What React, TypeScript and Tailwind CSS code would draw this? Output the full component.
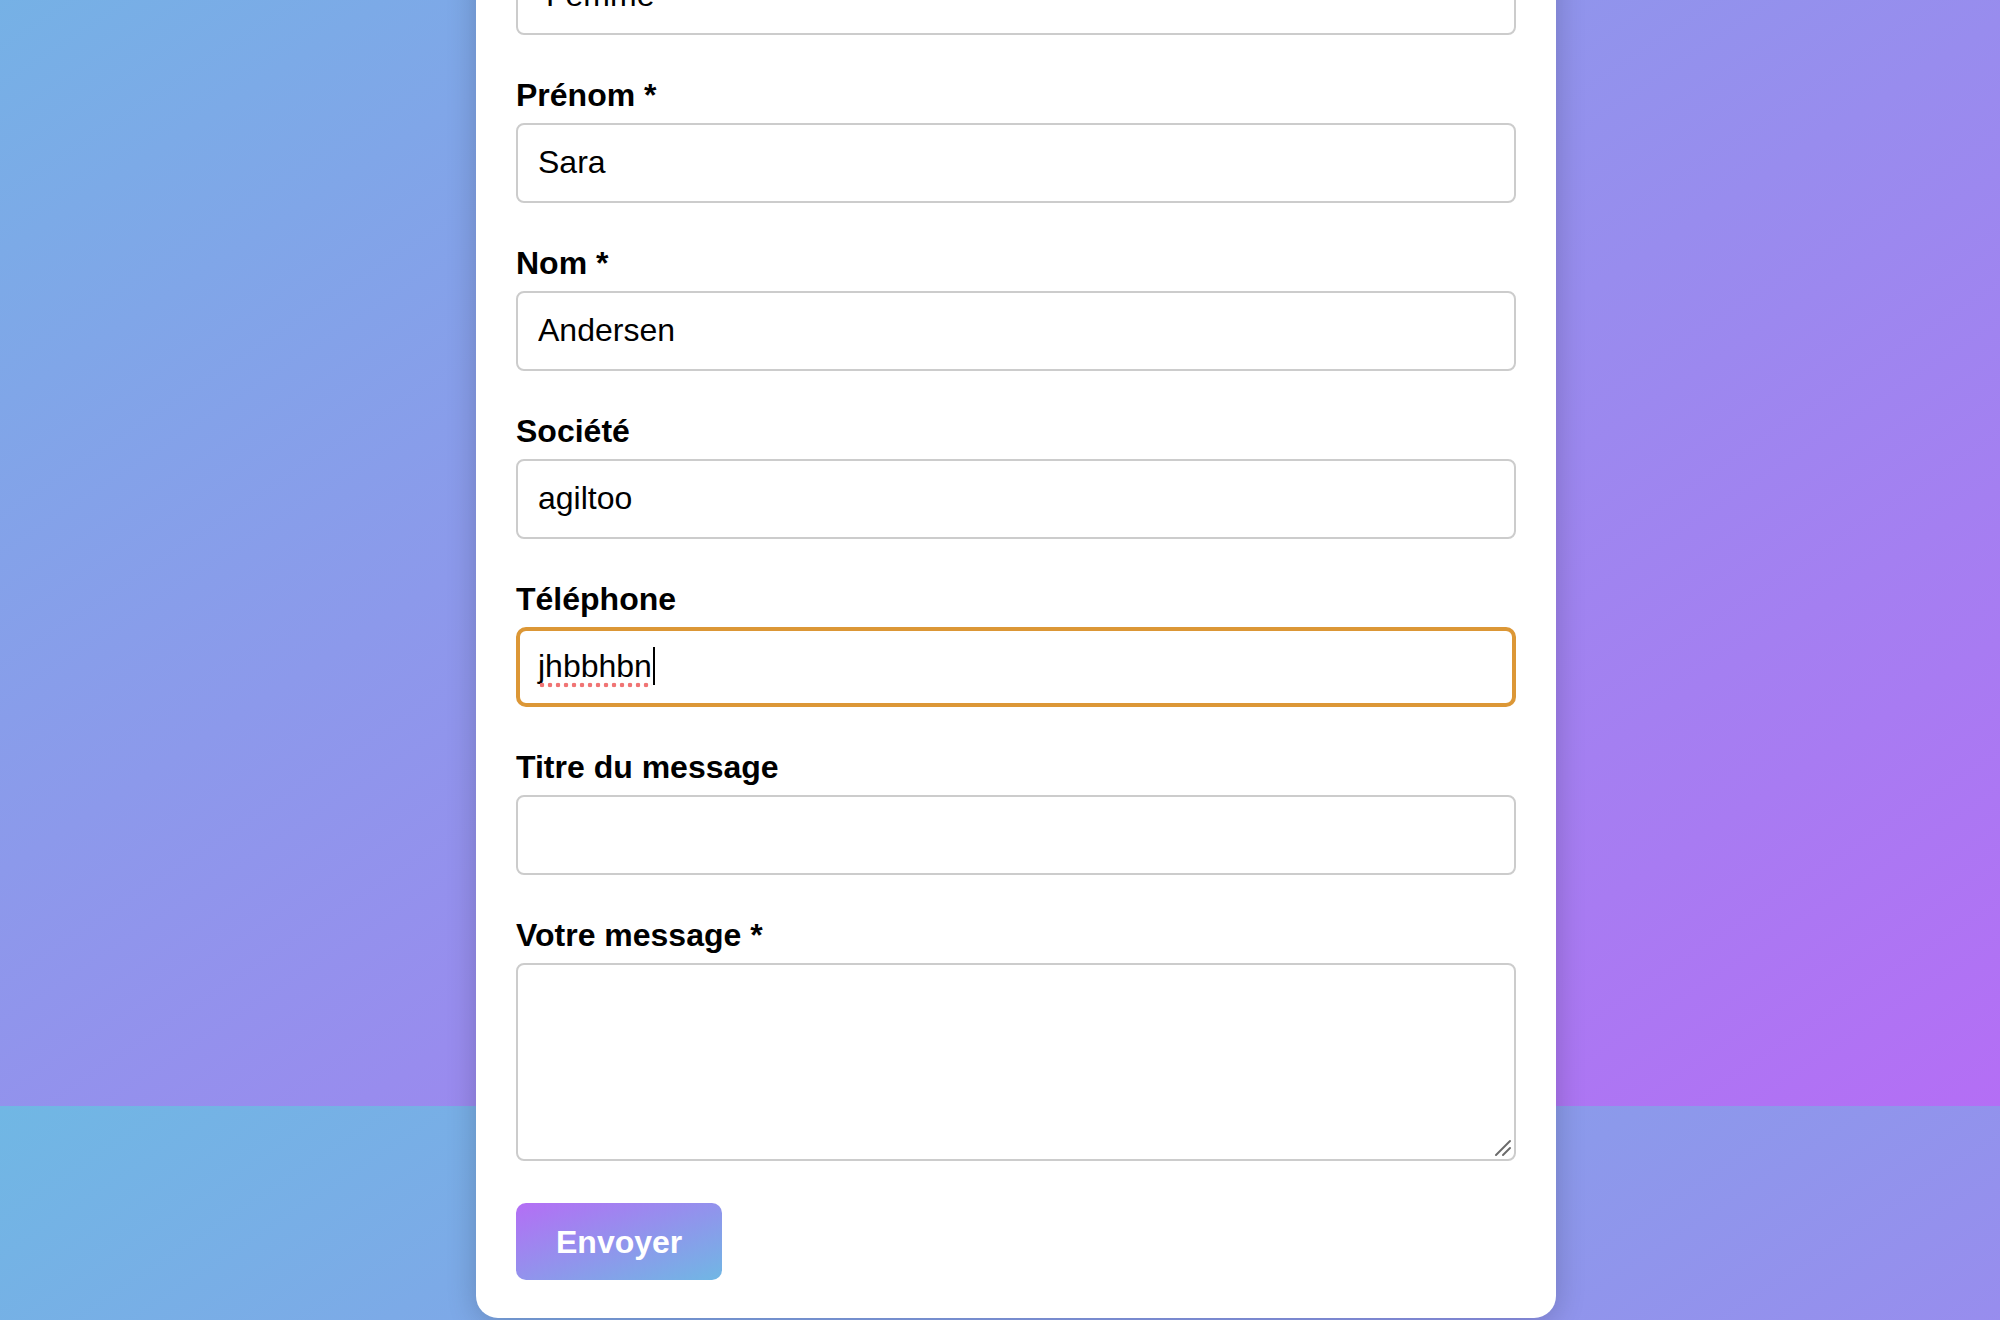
const fields = [
  { label: "Prénom *", value: "Sara" },
  { label: "Nom *", value: "Andersen" },
  { label: "Société", value: "agiltoo" },
];

const inputClass =
  "block h-[80px] w-full rounded-[8px] border-2 border-[#cccccc] bg-white px-[20px] pb-[2px] text-[32px] text-black outline-none";

function Label({ children }: { children: React.ReactNode }) {
  return <label className="mb-[9px] block text-[32px] font-bold leading-[37px] text-black">{children}</label>;
}

export default function App() {
  return (
    <div className="h-[1320px] w-full overflow-hidden bg-[linear-gradient(to_bottom_right,#70b7e4,#b46ef5)] bg-[length:100%_1320px] bg-[position:0_-214px] bg-repeat-y font-['Liberation_Sans',Arial,sans-serif]">
      <form
        className="-mt-[85px] ml-[476px] w-[1080px] rounded-[22px] bg-white px-[40px] pb-[38px] pt-[40px] shadow-[0_4px_30px_rgba(0,0,0,0.2)]"
        onSubmit={(e) => e.preventDefault()}
      >
        <div className="mb-[42px]">
          <select
            defaultValue="Femme"
            className="block h-[80px] w-full appearance-none rounded-[8px] border-2 border-[#cccccc] bg-white pl-[28px] text-[32px] text-black outline-none"
          >
            <option>Madame</option>
            <option>Femme</option>
            <option>Homme</option>
          </select>
        </div>

        {fields.map((f) => (
          <div key={f.label} className="mb-[42px]">
            <Label>{f.label}</Label>
            <input type="text" defaultValue={f.value} className={inputClass} />
          </div>
        ))}

        <div className="mb-[42px]">
          <Label>Téléphone</Label>
          <div className="flex h-[80px] w-full items-center rounded-[10px] border-4 border-[#dc9736] bg-white pb-[2px] pl-[18px] text-[32px] text-black">
            <span className="relative">
              jhbbhbn
              {/* spell-check squiggle */}
              <span className="absolute bottom-[2px] left-0 right-0 h-[6px] bg-[radial-gradient(circle,#f07474_2px,transparent_2.6px)] bg-[length:8px_6px] bg-repeat-x" />
            </span>
            <span className="ml-[1px] inline-block h-[38px] w-[2px] bg-black" />
          </div>
        </div>

        <div className="mb-[42px]">
          <Label>Titre du message</Label>
          <input type="text" className={inputClass} />
        </div>

        <div className="mb-[42px]">
          <Label>Votre message *</Label>
          <div className="relative">
            <textarea className="block h-[198px] w-full resize-none rounded-[8px] border-2 border-[#cccccc] bg-white px-[20px] py-[16px] text-[32px] text-black outline-none" />
            {/* resize grip, drawn at page scale */}
            <svg
              className="pointer-events-none absolute bottom-[4px] right-[4px] h-[18px] w-[18px]"
              viewBox="0 0 18 18"
              stroke="#6b6b6b"
              strokeWidth="2"
              strokeLinecap="round"
            >
              <line x1="2" y1="16" x2="16" y2="2" />
              <line x1="9" y1="16" x2="16" y2="9" />
            </svg>
          </div>
        </div>

        <button
          type="submit"
          className="h-[77px] rounded-[10px] bg-[linear-gradient(to_bottom_right,#b46ef5,#70b7e4)] px-[40px] text-[32px] font-bold text-white"
        >
          Envoyer
        </button>
      </form>
    </div>
  );
}
